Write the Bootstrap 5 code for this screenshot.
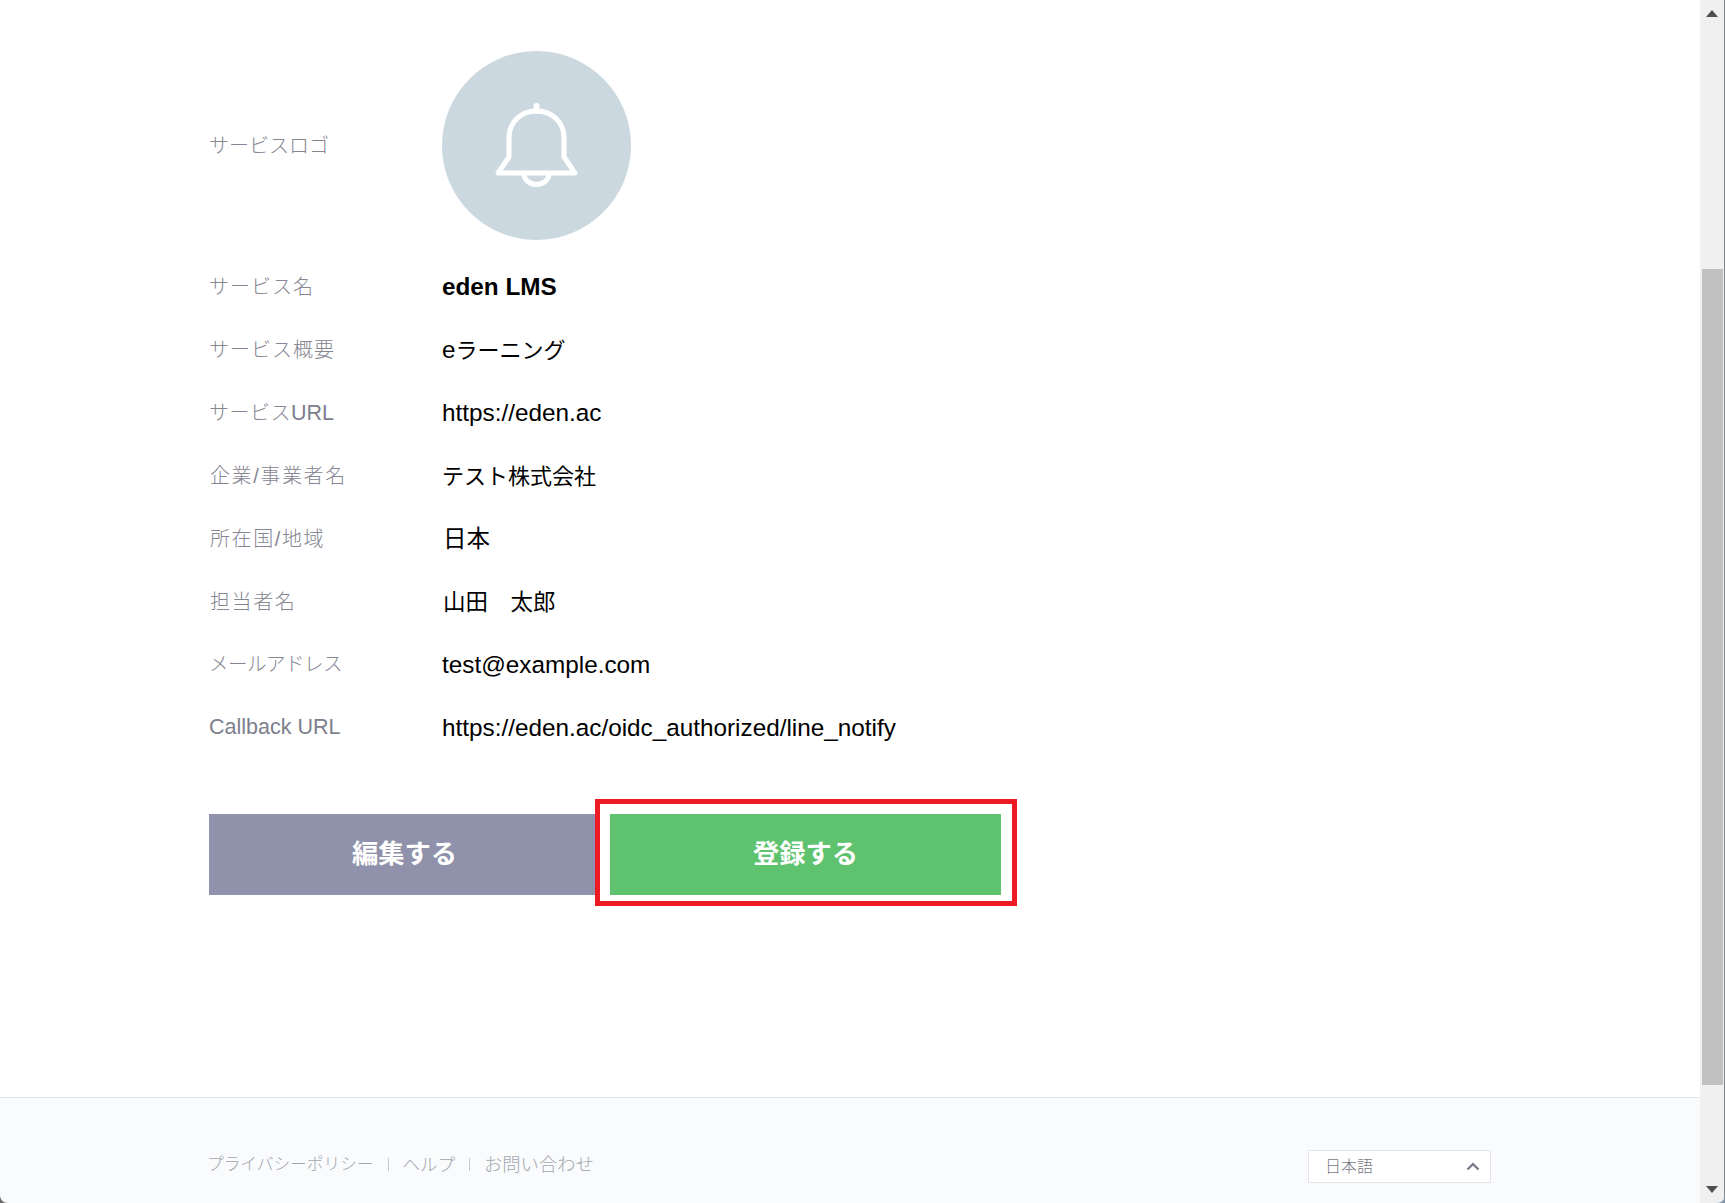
<!DOCTYPE html>
<html lang="ja">

<head>
    <meta charset="UTF-8">
    <meta name="viewport" content="width=device-width, initial-scale=1.0">
    <title>LINE Notify</title>
    <link href="https://cdn.jsdelivr.net/npm/bootstrap@5.3.0/dist/css/bootstrap.min.css" rel="stylesheet">

<style>
        /* Page Frame */
        html, body {
            height: 1203px;
            overflow: hidden;
        }

        body {
            font-family: "Liberation Sans", "Noto Sans CJK JP", sans-serif;
            color: #000;
            position: relative;
        }

        .page-main {
            width: 1700px;
            height: 1203px;
        }

        /* Service Detail Rows */
        .detail-area {
            padding: 51px 209px 0;
        }

        .logo-row {
            margin-bottom: 15px;
        }

        .logo-circle {
            width: 189px;
            height: 189px;
            background-color: #ccd8e0;
        }

        .detail-row {
            height: 63px;
        }

        .detail-label {
            width: 233px;
            font-size: 21.5px;
            color: #7d7f8c;
        }

        .detail-value {
            padding-top: 2px;
            font-size: 24.3px;
        }

        .jp-label {
            display: inline-block;
            padding-top: 2px;
            font-size: 20px;
            font-weight: 300;
            color: #858692;
        }

        /* Kana Runs Are Tighter And Kanji Runs Wider In The Original Font */
        .track-tight {
            font-size: 19.5px;
            letter-spacing: -0.5px;
        }

        .track-half {
            letter-spacing: 0.5px;
        }

        .track-one {
            letter-spacing: 1px;
        }

        .track-wide {
            margin-left: 1px;
            letter-spacing: 1.6px;
        }

        .jp-value {
            font-size: 22px;
        }

        .jp-kanji {
            margin-left: 1px;
            font-size: 23.5px;
        }

        .jp-name {
            margin-left: 1px;
            font-size: 22.5px;
        }

        /* Buttons */
        .action-row {
            margin-top: 55px;
            gap: 10px;
        }

        .action-btn {
            width: 391px;
            height: 81px;
            font-size: 26.3px;
            font-weight: 700;
            color: #fff;
            border: 0;
            border-radius: 0;
        }

        .btn-edit {
            background-color: #9091aa;
        }

        .btn-register {
            background-color: #5ec26f;
        }

        /* Red Annotation Box */
        .red-box {
            position: absolute;
            top: -15px;
            left: -15px;
            right: -16px;
            bottom: -11px;
            border: 5px solid #ed1c24;
            pointer-events: none;
        }

        /* Footer */
        .page-footer {
            height: 106px;
            padding: 52px 209px 0 207px;
            background-color: #f9fbfd;
            border-top: 1px solid #e4e6ea;
        }

        .footer-links {
            padding-top: 1px;
        }

        .footer-link {
            font-size: 16.7px;
            font-weight: 300;
            color: #a5a6ae;
            text-decoration: none;
        }

        .link-help {
            font-size: 17.5px;
        }

        .link-contact {
            font-size: 18.3px;
        }

        .footer-sep {
            width: 1px;
            height: 13px;
            margin: 0 14px;
            background-color: #c8c9ce;
        }

        .lang-box {
            width: 183px;
            height: 33px;
            padding: 0 10px 0 16px;
            font-size: 16px;
            font-weight: 300;
            color: #777885;
            background-color: #fff;
            border: 1px solid #e5e6eb;
        }

        /* Browser Scrollbar */
        .fake-scrollbar {
            width: 25px;
            height: 1203px;
            background-color: #f0f0f0;
            border-right: 1px solid #7f878e;
        }

        .scroll-thumb {
            width: 21px;
            height: 816px;
            margin: 252px 0 0 2px;
            background-color: #c1c1c1;
        }

        .scroll-arrow {
            display: block;
            margin-left: 6px;
        }

        .arrow-up {
            margin-top: 10px;
        }

        .arrow-down {
            margin-top: 101px;
        }

        /* Window Corners */
        .window-corner {
            position: absolute;
            bottom: 0;
        }
</style>
</head>

<body>

    <div class="d-flex">

        <!-- Main Content -->
        <div class="page-main d-flex flex-column">
            <div class="detail-area flex-grow-1">

                <div class="d-flex align-items-center logo-row">
                    <div class="detail-label"><span class="jp-label">サービスロゴ</span></div>
                    <div class="logo-circle rounded-circle d-flex align-items-center justify-content-center">
                        <svg width="85" height="86" viewBox="0 0 85 86" fill="none" stroke="#fff" stroke-width="5">
                            <path d="M42.500 3v5" stroke-width="6" stroke-linecap="round"/>
                            <path d="M15 54V35C15 19 27 8 42.500 8S70 19 70 35v19l11 16H4z" stroke-linejoin="round"/>
                            <path d="M30 71c0 6 6 10.500 12.500 10.500S55 77 55 71"/>
                        </svg>
                    </div>
                </div>

                <div class="d-flex align-items-center detail-row">
                    <div class="detail-label"><span class="jp-label track-one">サービス名</span></div>
                    <div class="detail-value fw-bold">eden LMS</div>
                </div>
                <div class="d-flex align-items-center detail-row">
                    <div class="detail-label"><span class="jp-label track-one">サービス概要</span></div>
                    <div class="detail-value">e<span class="jp-value">ラーニング</span></div>
                </div>
                <div class="d-flex align-items-center detail-row">
                    <div class="detail-label"><span class="jp-label track-half">サービス</span>URL</div>
                    <div class="detail-value">https://eden.ac</div>
                </div>
                <div class="d-flex align-items-center detail-row">
                    <div class="detail-label"><span class="jp-label track-wide">企業/事業者名</span></div>
                    <div class="detail-value"><span class="jp-value">テスト株式会社</span></div>
                </div>
                <div class="d-flex align-items-center detail-row">
                    <div class="detail-label"><span class="jp-label track-wide">所在国/地域</span></div>
                    <div class="detail-value"><span class="jp-kanji">日本</span></div>
                </div>
                <div class="d-flex align-items-center detail-row">
                    <div class="detail-label"><span class="jp-label track-wide">担当者名</span></div>
                    <div class="detail-value"><span class="jp-name">山田　太郎</span></div>
                </div>
                <div class="d-flex align-items-center detail-row">
                    <div class="detail-label"><span class="jp-label track-tight">メールアドレス</span></div>
                    <div class="detail-value">test@example.com</div>
                </div>
                <div class="d-flex align-items-center detail-row">
                    <div class="detail-label">Callback URL</div>
                    <div class="detail-value">https://eden.ac/oidc_authorized/line_notify</div>
                </div>

                <div class="d-flex action-row">
                    <button type="button" class="btn action-btn btn-edit">編集する</button>
                    <button type="button" class="btn action-btn btn-register position-relative">登録する<span class="red-box"></span></button>
                </div>
            </div>

            <!-- Footer -->
            <div class="page-footer d-flex justify-content-between align-items-start">
                <div class="d-flex align-items-center footer-links">
                    <a href="#" class="footer-link">プライバシーポリシー</a>
                    <span class="footer-sep"></span>
                    <a href="#" class="footer-link link-help">ヘルプ</a>
                    <span class="footer-sep"></span>
                    <a href="#" class="footer-link link-contact">お問い合わせ</a>
                </div>
                <div class="lang-box d-flex align-items-center justify-content-between">
                    <span>日本語</span>
                    <svg width="14" height="9" viewBox="0 0 14 9" fill="none" stroke="#777885" stroke-width="2.2">
                        <path d="M1.500 7.500 7 2l5.500 5.500"/>
                    </svg>
                </div>
            </div>
        </div>

        <!-- Scrollbar Of The Browser Window -->
        <div class="fake-scrollbar">
            <svg class="scroll-arrow arrow-up" width="12" height="7" viewBox="0 0 12 7"><path d="M0 7 6 0l6 7z" fill="#505050"/></svg>
            <div class="scroll-thumb"></div>
            <svg class="scroll-arrow arrow-down" width="12" height="7" viewBox="0 0 12 7"><path d="M0 0h12L6 7z" fill="#505050"/></svg>
        </div>
    </div>

    <!-- Window Corners -->
    <svg class="window-corner start-0" width="8" height="8" viewBox="0 0 8 8"><path d="M0 0C0 4.500 3.500 8 8 8H0z" fill="#6e6e6e"/></svg>
    <svg class="window-corner end-0" width="8" height="8" viewBox="0 0 8 8"><path d="M8 0C8 4.500 4.500 8 0 8h8z" fill="#7f98ad"/></svg>

    <script src="https://cdn.jsdelivr.net/npm/bootstrap@5.3.0/dist/js/bootstrap.bundle.min.js"></script>
</body>

</html>
